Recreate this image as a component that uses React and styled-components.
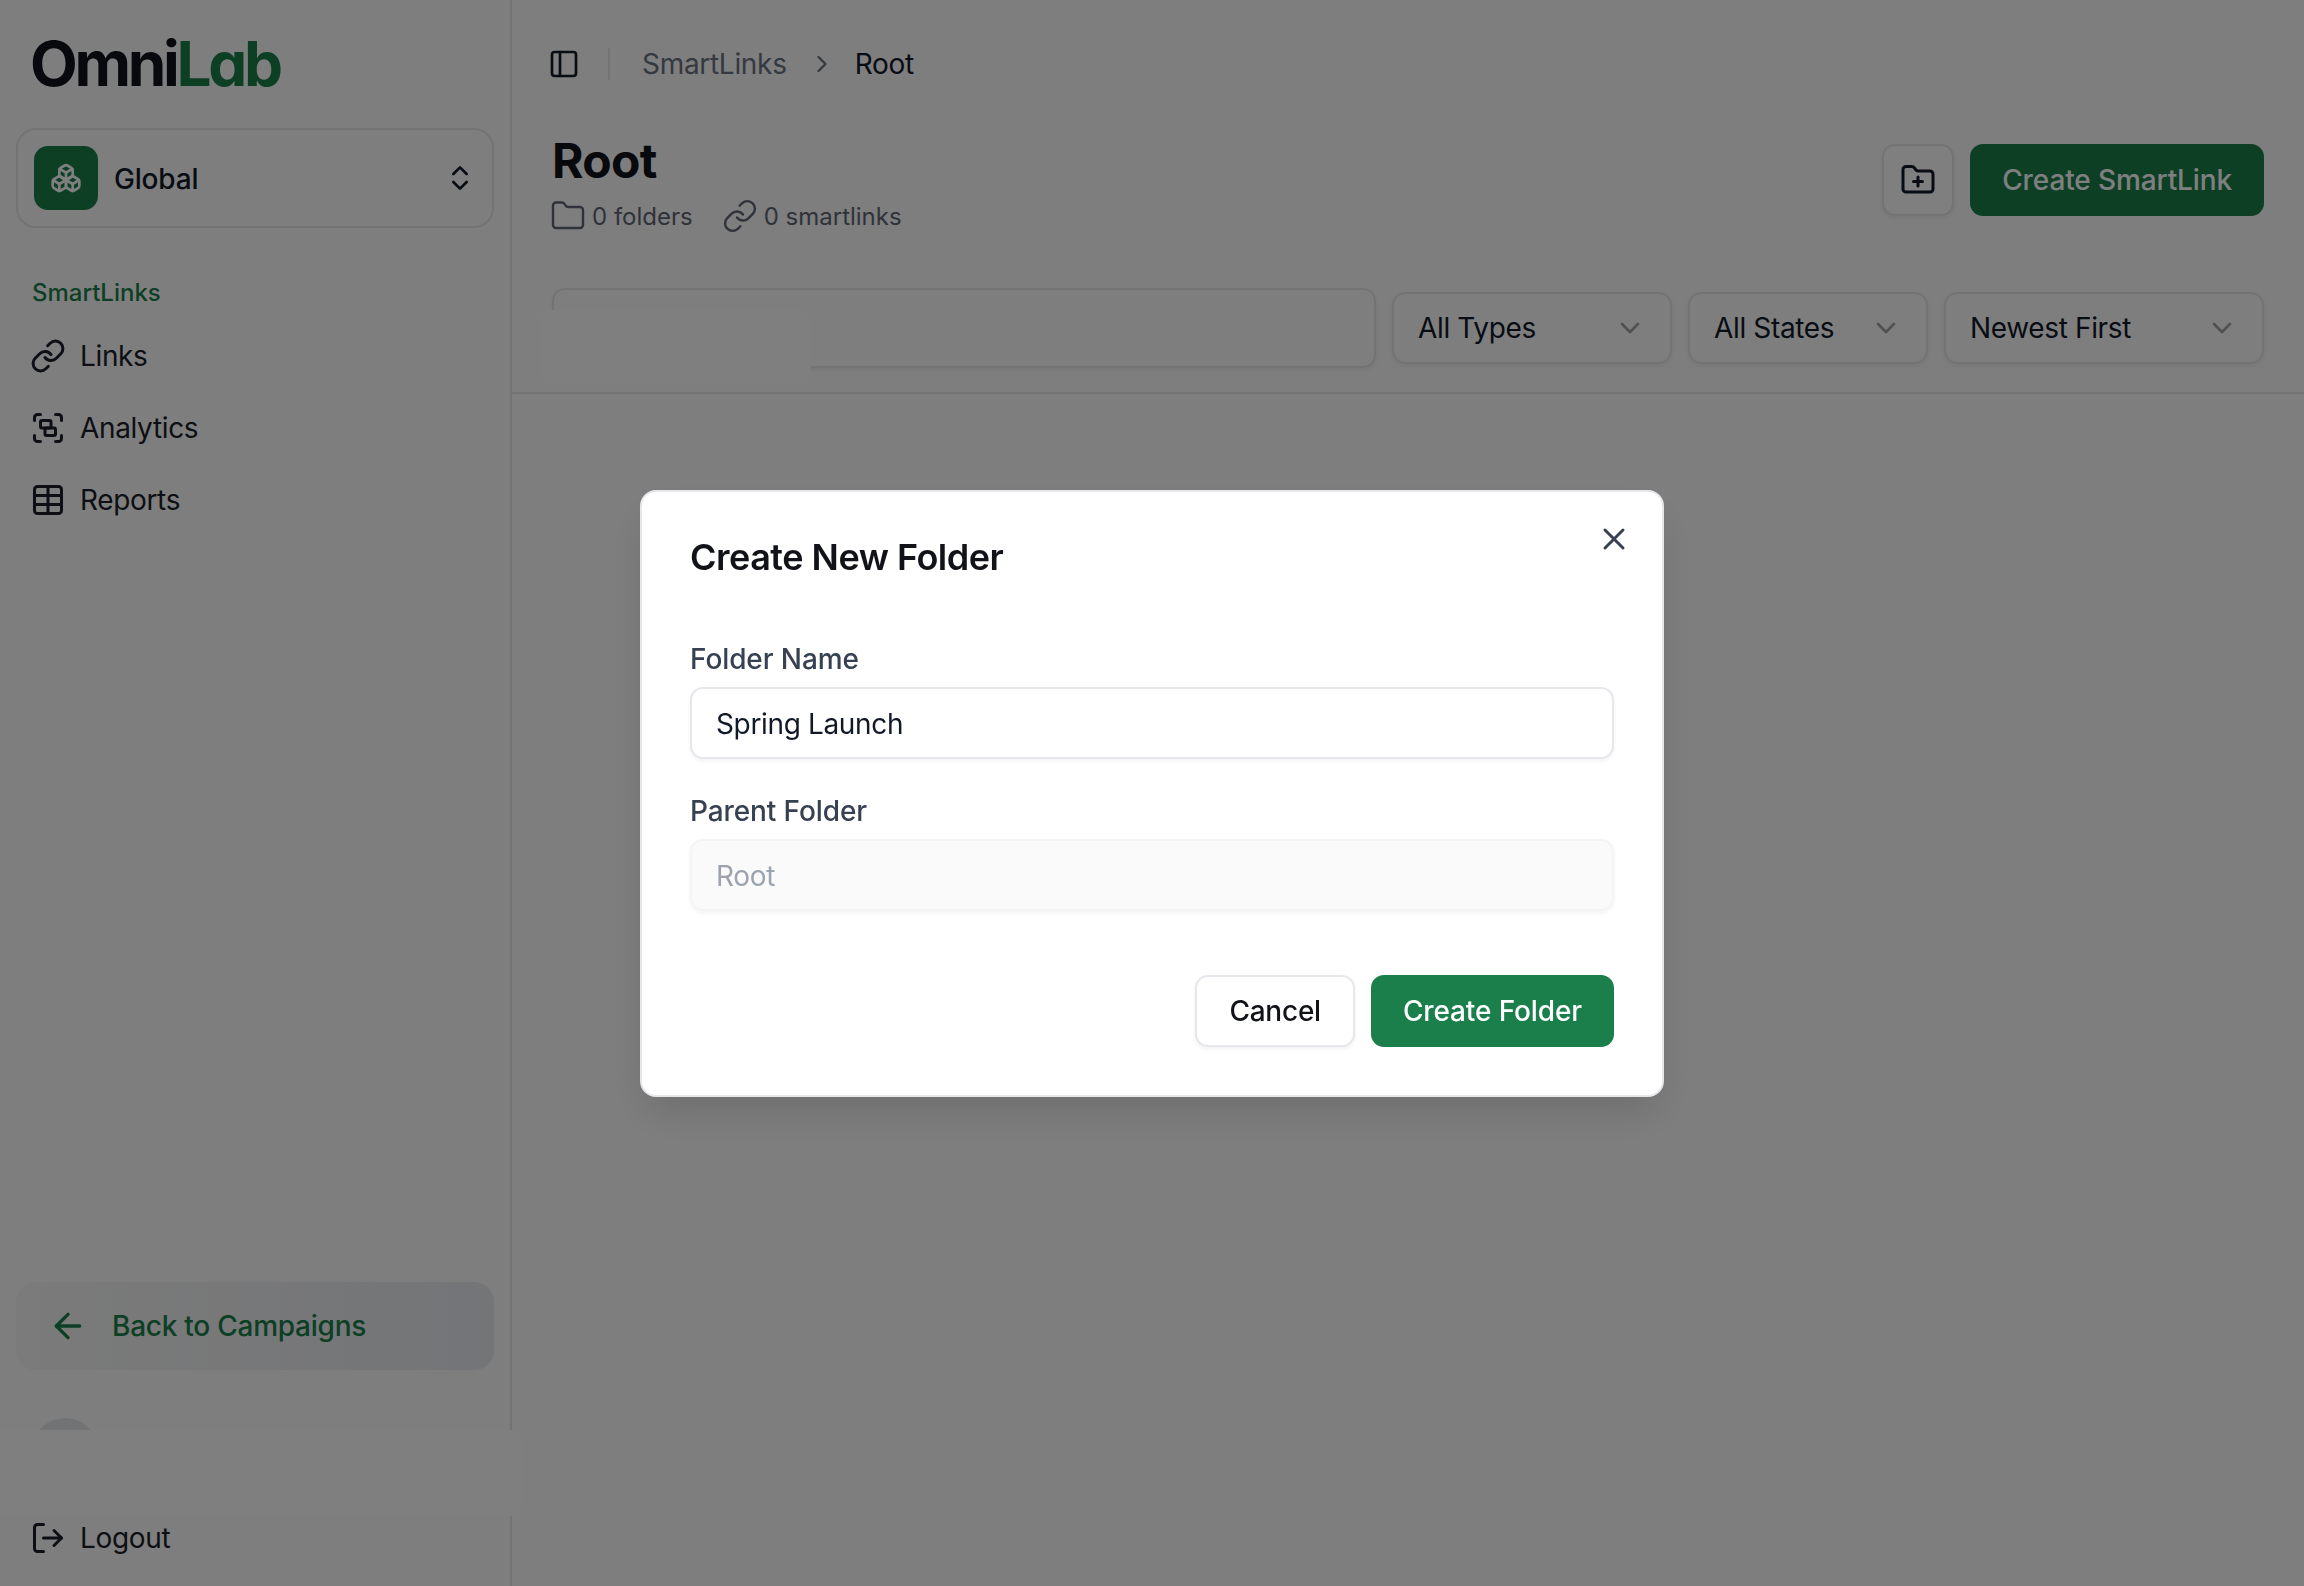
import React from 'react'
import styled, { createGlobalStyle } from 'styled-components'
import {
  ArrowLeft,
  Boxes,
  ChevronDown,
  ChevronRight,
  ChevronsUpDown,
  Folder,
  FolderPlus,
  Group,
  Link as LinkIcon,
  LogOut,
  PanelLeft,
  Table,
  X,
} from 'lucide-react'

const GREEN = '#1a7f4a'

const GlobalStyle = createGlobalStyle`
  html, body {
    margin: 0;
    height: 100%;
    background: #fff;
  }
  * {
    box-sizing: border-box;
  }
  body {
    font-family: 'Inter', 'Liberation Sans', sans-serif;
    color: #111827;
  }
`

const Page = styled.div`
  display: flex;
  height: 100vh;
  overflow: hidden;
  position: relative;
`

const Sidebar = styled.aside`
  width: 512px;
  flex: none;
  display: flex;
  flex-direction: column;
  background: #fcfcfc;
  border-right: 2px solid #e5e7eb;
  padding: 0 16px;
`

const Logo = styled.div`
  font-size: 62px;
  font-weight: 700;
  line-height: 48px;
  letter-spacing: -3.3px;
  padding: 40px 0 0 14px;
  font-feature-settings: 'cv11' 1;
  color: #111318;
  white-space: nowrap;

  span {
    color: ${GREEN};
  }
`

const WorkspaceSelect = styled.div`
  margin-top: 40px;
  height: 100px;
  width: 478px;
  display: flex;
  align-items: center;
  gap: 16px;
  padding: 0 16px 0 16px;
  border: 2px solid #e5e7eb;
  border-radius: 20px;
`

const WorkspaceIcon = styled.div`
  width: 64px;
  height: 64px;
  flex: none;
  display: flex;
  align-items: center;
  justify-content: center;
  border-radius: 14px;
  background: ${GREEN};
  color: #fff;
`

const WorkspaceName = styled.span`
  flex: 1;
  padding-top: 2px;
  font-size: 28px;
  font-weight: 500;
  letter-spacing: -0.2px;
`

const NavGroup = styled.nav`
  margin-top: 49px;
  display: flex;
  flex-direction: column;
`

const NavHeading = styled.div`
  padding-left: 16px;
  font-size: 24px;
  font-weight: 500;
  line-height: 32px;
  color: ${GREEN};
  margin-bottom: 11px;
`

const NavItem = styled.a`
  height: 72px;
  display: flex;
  align-items: center;
  gap: 14px;
  padding-left: 14px;
  font-size: 28px;
  letter-spacing: -0.35px;
  color: #1a1f28;
`

const BackButton = styled.a`
  margin-top: auto;
  width: 478px;
  height: 88px;
  flex: none;
  display: flex;
  align-items: center;
  gap: 24px;
  padding-left: 32px;
  border-radius: 20px;
  background: linear-gradient(90deg, #f6f6f6, #e8eaef);
  font-size: 28px;
  font-weight: 500;
  letter-spacing: -0.25px;
  color: ${GREEN};
`

const UserRow = styled.div`
  height: 136px;
  padding: 48px 0 0 16px;
  flex: none;
`

const Avatar = styled.div`
  width: 66px;
  height: 66px;
  border-radius: 50%;
  background: #e5e7eb;
`

const LogoutRow = styled(NavItem)`
  height: 64px;
  margin-bottom: 16px;
  flex: none;
`

const Main = styled.main`
  flex: 1;
  min-width: 0;
  display: flex;
  flex-direction: column;
  background: #fcfcfc;
`

const TopBar = styled.header`
  height: 128px;
  flex: none;
  display: flex;
  align-items: center;
  padding-left: 36px;
`

const TopDivider = styled.div`
  width: 2px;
  height: 32px;
  margin: 0 32px 0 28px;
  background: #e5e7eb;
`

const Crumb = styled.span`
  font-size: 28px;
  letter-spacing: -0.3px;
  color: ${(props) => (props.$current ? '#111827' : '#6b7280')};
`

const CrumbSep = styled.span`
  display: flex;
  margin: 0 19px 0 21px;
  color: #6b7280;
`

const PageHead = styled.section`
  display: flex;
  justify-content: space-between;
  align-items: flex-start;
  padding: 0 40px;
`

const Title = styled.h1`
  margin: 5px 0 0;
  font-size: 48px;
  line-height: 56px;
  font-weight: 700;
  letter-spacing: -0.7px;
  color: #111318;
`

const Meta = styled.div`
  display: flex;
  align-items: center;
  gap: 29px;
  margin-top: 9px;
  margin-left: -2px;
  height: 36px;
  color: #5f6673;
  font-size: 24px;
`

const MetaItem = styled.span`
  display: flex;
  align-items: center;
  gap: 6px;
`

const HeadActions = styled.div`
  display: flex;
  gap: 16px;
  padding-top: 16px;
`

const IconButton = styled.button`
  width: 72px;
  height: 72px;
  display: flex;
  align-items: center;
  justify-content: center;
  padding: 0;
  border: 2px solid #e5e7eb;
  border-radius: 13px;
  background: #fff;
  box-shadow: 0 2px 4px rgba(0, 0, 0, 0.06);
  color: #111827;
`

const SolidButton = styled.button`
  height: 72px;
  padding: 0 32px;
  border: 0;
  border-radius: 13px;
  background: ${GREEN};
  color: #fff;
  font-family: inherit;
  font-size: 28px;
  font-weight: 500;
  letter-spacing: -0.12px;
`

const FilterBar = styled.section`
  display: flex;
  align-items: center;
  gap: 16px;
  margin-top: 54px;
  padding: 0 40px 24px;
  border-bottom: 2px solid #e5e7eb;
`

const SearchBox = styled.div`
  flex: 1;
  height: 80px;
  border: 2px solid #e5e7eb;
  border-radius: 13px;
  box-shadow: 0 2px 4px rgba(0, 0, 0, 0.06);
`

const FilterSelect = styled.div`
  width: ${(props) => props.$width}px;
  height: 72px;
  flex: none;
  display: flex;
  align-items: center;
  justify-content: space-between;
  padding: 0 24px;
  border: 2px solid #e5e7eb;
  border-radius: 13px;
  box-shadow: 0 2px 4px rgba(0, 0, 0, 0.06);
  font-size: 28px;
  letter-spacing: -0.35px;
  color: #111827;

  svg {
    color: #a3a3a3;
  }
`

/* blanked-out areas of the capture, they sit over the page but under the dim layer */
const Patch = styled.div`
  position: absolute;
  left: ${(props) => props.$x}px;
  top: ${(props) => props.$y}px;
  width: ${(props) => props.$w}px;
  height: ${(props) => props.$h}px;
  border-radius: 14px;
  background: #fff;
`

const Overlay = styled.div`
  position: fixed;
  inset: 0;
  display: flex;
  align-items: center;
  justify-content: center;
  background: rgba(0, 0, 0, 0.5);
`

const Modal = styled.div`
  position: relative;
  width: 1024px;
  padding: 48px;
  background: #fff;
  border: 2px solid #e5e7eb;
  border-radius: 16px;
  box-shadow: 0 20px 40px -8px rgba(0, 0, 0, 0.15);
`

const CloseButton = styled.button`
  position: absolute;
  top: 29px;
  right: 30px;
  display: flex;
  padding: 0;
  border: 0;
  background: none;
  color: #374151;
`

const ModalTitle = styled.h2`
  margin: -1px 0 64px;
  font-size: 36px;
  line-height: 36px;
  font-weight: 600;
  letter-spacing: -0.5px;
  color: #111318;
`

const Field = styled.div`
  display: flex;
  flex-direction: column;
  gap: 8px;
  margin-bottom: 32px;
`

const Label = styled.label`
  font-size: 28px;
  line-height: 40px;
  font-weight: 500;
  letter-spacing: -0.1px;
  color: #374151;
`

const TextInput = styled.div`
  height: 72px;
  display: flex;
  align-items: center;
  padding: 2px 24px 0;
  border: 2px solid ${(props) => (props.$disabled ? '#f3f4f6' : '#e5e7eb')};
  border-radius: 13px;
  background: ${(props) => (props.$disabled ? '#fafafa' : '#fff')};
  box-shadow: 0 2px 4px rgba(0, 0, 0, 0.05);
  font-size: 28px;
  letter-spacing: -0.35px;
  color: ${(props) => (props.$disabled ? '#9ca3af' : '#111827')};
`

const ModalActions = styled.div`
  display: flex;
  justify-content: flex-end;
  gap: 16px;
  margin-top: 64px;
`

const CancelButton = styled.button`
  height: 72px;
  padding: 0 32px;
  border: 2px solid #e5e7eb;
  border-radius: 13px;
  background: #fff;
  box-shadow: 0 2px 4px rgba(0, 0, 0, 0.06);
  color: #111318;
  font-family: inherit;
  font-size: 28px;
  font-weight: 500;
  letter-spacing: -0.25px;
`

export default function App() {
  return (
    <>
      <GlobalStyle />
      <Page>
        <Sidebar>
          <Logo>
            Omni<span>Lab</span>
          </Logo>
          <WorkspaceSelect>
            <WorkspaceIcon>
              <Boxes size={32} strokeWidth={2} />
            </WorkspaceIcon>
            <WorkspaceName>Global</WorkspaceName>
            <ChevronsUpDown size={32} strokeWidth={2} />
          </WorkspaceSelect>
          <NavGroup>
            <NavHeading>SmartLinks</NavHeading>
            <NavItem>
              <LinkIcon size={36} strokeWidth={2} />
              Links
            </NavItem>
            <NavItem>
              <Group size={36} strokeWidth={2} />
              Analytics
            </NavItem>
            <NavItem>
              <Table size={36} strokeWidth={2} />
              Reports
            </NavItem>
          </NavGroup>
          <BackButton>
            <ArrowLeft size={40} strokeWidth={2} />
            Back to Campaigns
          </BackButton>
          <UserRow>
            <Avatar />
          </UserRow>
          <LogoutRow>
            <LogOut size={36} strokeWidth={2} />
            Logout
          </LogoutRow>
        </Sidebar>
        <Main>
          <TopBar>
            <PanelLeft size={32} strokeWidth={2} />
            <TopDivider />
            <Crumb>SmartLinks</Crumb>
            <CrumbSep>
              <ChevronRight size={28} strokeWidth={2} />
            </CrumbSep>
            <Crumb $current>Root</Crumb>
          </TopBar>
          <PageHead>
            <div>
              <Title>Root</Title>
              <Meta>
                <MetaItem>
                  <Folder size={36} strokeWidth={1.6} />0 folders
                </MetaItem>
                <MetaItem>
                  <LinkIcon size={36} strokeWidth={1.6} />0 smartlinks
                </MetaItem>
              </Meta>
            </div>
            <HeadActions>
              <IconButton>
                <FolderPlus size={36} strokeWidth={2} />
              </IconButton>
              <SolidButton>Create SmartLink</SolidButton>
            </HeadActions>
          </PageHead>
          <FilterBar>
            <SearchBox />
            <FilterSelect $width={280}>
              All Types
              <ChevronDown size={32} strokeWidth={2} />
            </FilterSelect>
            <FilterSelect $width={240}>
              All States
              <ChevronDown size={32} strokeWidth={2} />
            </FilterSelect>
            <FilterSelect $width={320}>
              Newest First
              <ChevronDown size={32} strokeWidth={2} />
            </FilterSelect>
          </FilterBar>
        </Main>
        <Patch $x={-20} $y={1430} $w={542} $h={86} />
        <Patch $x={540} $y={310} $w={271} $h={75} />
      </Page>
      <Overlay>
        <Modal>
          <CloseButton>
            <X size={36} strokeWidth={2} />
          </CloseButton>
          <ModalTitle>Create New Folder</ModalTitle>
          <Field>
            <Label>Folder Name</Label>
            <TextInput>Spring Launch</TextInput>
          </Field>
          <Field>
            <Label>Parent Folder</Label>
            <TextInput $disabled>Root</TextInput>
          </Field>
          <ModalActions>
            <CancelButton>Cancel</CancelButton>
            <SolidButton>Create Folder</SolidButton>
          </ModalActions>
        </Modal>
      </Overlay>
    </>
  )
}
